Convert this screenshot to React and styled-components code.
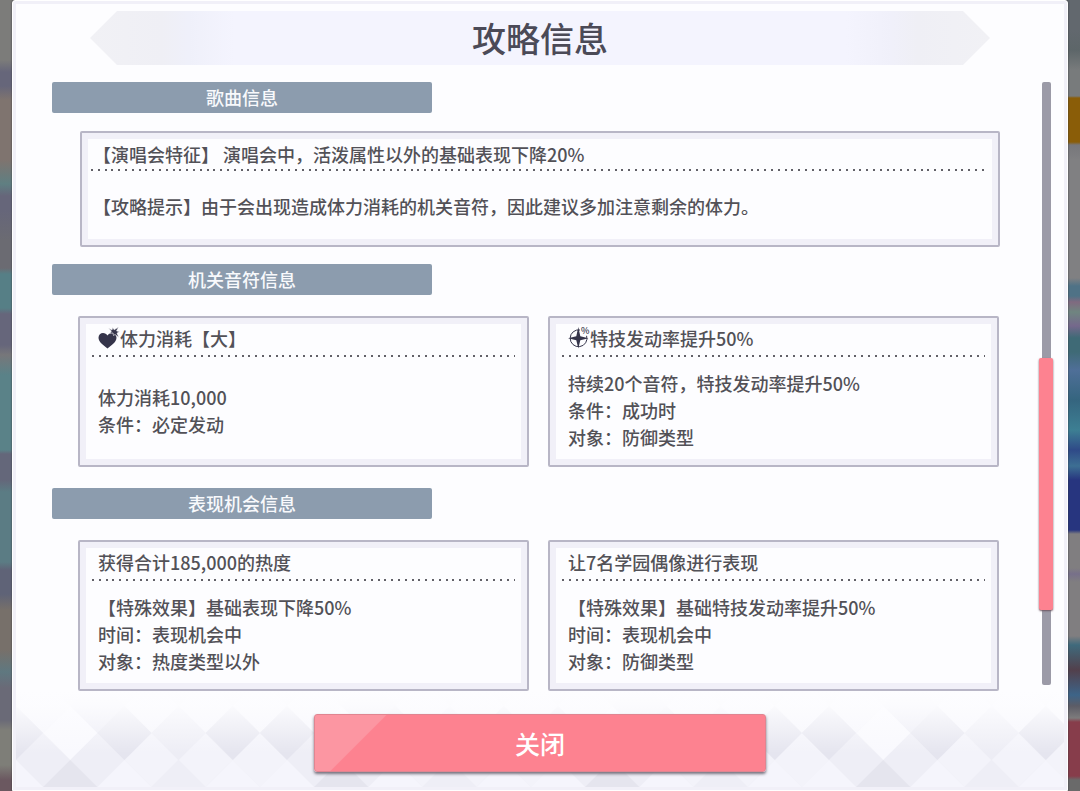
import React from "react";
import styled, { createGlobalStyle } from "styled-components";

const colors = {
  text: "#525157",
  title: "#4b4a57",
  icon: "#35344a",
  paper: "#fdfdff",
  frame: "#f1f0f8",
  line: "#b8b6c6",
  tag: "#8c9cae",
  pink: "#fd8290",
  pinkLight: "#fc96a2",
  track: "#9b9aa7",
};

const GlobalStyle = createGlobalStyle`
  * {
    box-sizing: border-box;
  }

  body {
    margin: 0;
    font-family: "Noto Sans CJK SC", "Noto Sans", sans-serif;
    font-weight: 500;
    color: ${colors.text};
  }
`;

const Backdrop = styled.div`
  min-height: 100vh;
  display: flex;
  padding: 0 12px;
  background:
    linear-gradient(
        #7c7c7a 0 60px, #66667a 72px 86px, #7f746f 100px 160px, #5f7f82 184px,
        #66667a 196px 210px, #6b6b72 240px 268px, #567f86 274px 308px,
        #66667b 314px 345px, #77777a 355px, #5a8288 375px 450px,
        #64677a 454px 480px, #5b7c84 492px 562px, #5f6377 570px 594px,
        #77706a 610px 650px, #5f7880 672px, #6a6a77 688px 720px,
        #7e7e78 730px 765px, #6b5860 780px
      )
      left / 50% 100% no-repeat,
    linear-gradient(
        #62686e 0 30px, #5d6669 50px, #787b7c 70px 96px, #8a5d08 98px 142px,
        #77777b 145px, #808082 160px 278px, #4f7286 286px 296px,
        #806a80 302px, #6f8580 312px, #75688c 326px, #3f6a76 338px 352px,
        #4f6f98 370px, #35657f 400px, #3d7f93 430px, #2f4a88 450px,
        #3d6f93 466px, #27357f 480px 530px, #807e80 534px 568px,
        #77708a 574px, #807e80 582px 636px, #3f6a7c 645px, #52404c 670px,
        #3d6488 695px, #5c5c66 706px, #7d7b7c 718px, #873d4b 722px 776px,
        #6a6a6a 780px
      )
      right / 50% 100% no-repeat;
`;

const Dialog = styled.main`
  flex: 1;
  min-width: 0;
  display: flex;
  flex-direction: column;
  padding-top: 10px;
  border: 1px solid #ffffff;
  border-radius: 3px 3px 0 0;
  background: ${colors.paper};
  box-shadow: inset 0 0 0 3px ${colors.frame}, 0 0 2px #33323a;
`;

const Banner = styled.h1`
  margin: 0 77px;
  height: 54px;
  display: flex;
  align-items: center;
  justify-content: center;
  font-size: 34px;
  line-height: 54px;
  font-weight: 500;
  color: ${colors.title};
  background: linear-gradient(
    to right,
    #f1f1f5,
    #efeff5 8%,
    #eff0fa 11%,
    #f4f4fe 16% 84%,
    #f0f0fa 89%,
    #efeff5 92%,
    #f1f1f5
  );
  clip-path: polygon(
    0 50%,
    27px 0,
    calc(100% - 27px) 0,
    100% 50%,
    calc(100% - 27px) 100%,
    27px 100%
  );
`;

const Body = styled.div`
  flex: 1;
  display: flex;
  gap: 39px;
  padding: 17px 14px 0 39px;
`;

const Content = styled.div`
  flex: 1;
  min-width: 0;
  display: flex;
  flex-direction: column;
`;

const Section = styled.section`
  padding-bottom: ${(props) => (props.$wide ? "17px" : "21px")};

  &:last-child {
    padding-bottom: 0;
  }
`;

const SectionTag = styled.h2`
  margin: 0;
  width: 380px;
  max-width: 100%;
  height: 31px;
  border-radius: 2px;
  text-align: center;
  font-size: 18px;
  line-height: 31px;
  font-weight: 500;
  color: #f8f9fc;
  background: ${colors.tag};
`;

const Cards = styled.div`
  display: grid;
  grid-template-columns: ${(props) => (props.$wide ? "1fr" : "1fr 1fr")};
  gap: 19px;
  padding: ${(props) => (props.$wide ? "18px 0 0 28px" : "21px 1px 0 26px")};
`;

const CardBox = styled.article`
  display: flex;
  flex-direction: column;
  min-height: ${(props) => (props.$wide ? "116px" : "151px")};
  padding: ${(props) => (props.$wide ? "8px 10px 4px 9px" : "9px 12px 1px")};
  border: 2px solid ${colors.line};
  border-radius: 2px;
  box-shadow: inset 0 0 0 6px ${colors.frame};
`;

const CardTitle = styled.h3`
  margin: 0;
  display: flex;
  align-items: center;
  padding: ${(props) => (props.$wide ? "0 2px 2px" : "0 6px 6px")};
  height: 28px;
  font-size: 18px;
  line-height: 22px;
  font-weight: 500;
`;

// five dots every 34px
const Dots = styled.div`
  height: 2px;
  background: linear-gradient(
      to right,
      #626168 0 2px,
      transparent 2px 7px,
      #626168 7px 9px,
      transparent 9px 14px,
      #626168 14px 16px,
      transparent 16px 20px,
      #626168 20px 22px,
      transparent 22px 27px,
      #626168 27px 29px,
      transparent 29px
    )
    left / 34px 2px repeat-x;
`;

const CardText = styled.div`
  flex: 1;
  display: flex;
  flex-direction: column;
  justify-content: center;
  padding: 0 ${(props) => (props.$wide ? "2px" : "6px")};
  font-size: 18px;
  line-height: 27px;

  p {
    margin: 0;
  }
`;

const Icon = styled.svg`
  flex: none;
  width: 22px;
  height: 24px;
  overflow: visible;
`;

const Scrollbar = styled.div`
  width: 14px;
  margin-bottom: 6px;
  display: flex;
  flex-direction: column;
  align-items: center;
`;

const Track = styled.div`
  width: 9px;
  flex: ${(props) => props.$size};
  border-radius: ${(props) => (props.$end ? "0 0 2px 2px" : "2px 2px 0 0")};
  background: ${colors.track};
`;

const Thumb = styled.div`
  width: 14px;
  flex: ${(props) => props.$size};
  border-radius: 2px;
  background: ${colors.pink};
  box-shadow: 0 1px 2px #6d5560;
  z-index: 1;
`;

const Footer = styled.footer`
  position: relative;
  display: flex;
  justify-content: center;
  padding: 23px 0 18px;
`;

const Diamonds = styled.svg`
  position: absolute;
  inset: 0 3px 3px;
  width: calc(100% - 6px);
  height: calc(100% - 3px);
`;

const CloseButton = styled.button`
  position: relative;
  width: 452px;
  max-width: 90%;
  height: 58px;
  padding: 0;
  border: 1px solid #e08591;
  border-radius: 3px;
  font-family: inherit;
  font-size: 25px;
  line-height: 54px;
  font-weight: 500;
  color: #ffffff;
  background: linear-gradient(
    135deg,
    ${colors.pinkLight} 50px,
    ${colors.pink} 51px
  );
  box-shadow: 0 2px 3px #77717d;
  cursor: pointer;
`;

const HeartIcon = () => (
  <Icon viewBox="0 0 22 24" aria-hidden="true">
    <path
      fill={colors.icon}
      d="M9.500 22.500C5.500 19.500 .5 16 .5 11.800C.5 8.800 2.600 7 5 7C7 7 8.600 8 9.500 9.600C10.400 8 12 7 14 7C16.400 7 18.500 8.800 18.500 11.800C18.500 16 13.500 19.500 9.500 22.500Z"
    />
    <path
      fill={colors.icon}
      stroke={colors.paper}
      strokeWidth="0.6"
      d="M10.500 2L14 4L14.600 1.500L16.200 3.800L20.500 1L18.600 5L21.500 5.500L19 7.200L21 11.500L17 8.500L15.500 9.500L15 7L12 7L13.300 5.200Z"
    />
  </Icon>
);

const SparkIcon = () => (
  <Icon viewBox="0 0 22 24" aria-hidden="true">
    <path
      fill="none"
      stroke={colors.icon}
      strokeWidth="1"
      d="M12 4A8.400 8.400 0 1 0 18.600 9.800"
    />
    <path
      fill={colors.icon}
      d="M10.300 1L12.300 10.200L20.500 12.200L12.300 14.200L10.300 22.500L8.300 14.200L0 12.200L8.300 10.200Z"
    />
    <text x="13" y="8" fontSize="9" fill={colors.icon}>
      %
    </text>
  </Icon>
);

const CELL = 54.2;
const HALF = CELL / 2;

// one entry per row, the shades repeat every five diamonds
const rows = [
  { y: 15, start: HALF, fills: ["#f6f6fc", "#ececf5", "#f6f6fc", "#f6f6fc", "#f6f6fc"] },
  { y: 69, start: HALF, fills: ["#eeeef6", "#eeeef6", "#f3f3fa", "#f3f3fa", "#f3f3fa"] },
  { y: 42, start: 0, fills: ["#e5e5ef", "#f9f9fe", "#e5e5ef", "#ededf5", "#e5e5ef", "#e5e5ef"] },
  { y: 96, start: 0, fills: ["#f5f5fc", "#e5e5ee", "#f5f5fc", "#eeeef6", "#f5f5fc", "#f5f5fc"] },
];

const FooterPattern = () => (
  <Diamonds aria-hidden="true">
    <defs>
      <pattern id="diamonds" width={CELL * 5} height="100" patternUnits="userSpaceOnUse">
        <rect width="272" height="100" fill="#f0f0f8" />
        {rows.map(({ y, start, fills }) =>
          fills.map((fill, i) => {
            const x = start + i * CELL;
            return (
              <path
                key={`${i}-${y}`}
                fill={fill}
                d={`M${x - HALF} ${y}L${x} ${y - 27}L${x + HALF} ${y}L${x} ${y + 27}Z`}
              />
            );
          })
        )}
      </pattern>
      <linearGradient id="fade" x2="0" y2="1">
        <stop offset="0" stopColor={colors.paper} />
        <stop offset="0.15" stopColor={colors.paper} stopOpacity="0.9" />
        <stop offset="0.65" stopColor={colors.paper} stopOpacity="0" />
      </linearGradient>
    </defs>
    <rect width="100%" height="100%" fill="url(#diamonds)" />
    <rect width="100%" height="100%" fill="url(#fade)" />
  </Diamonds>
);

const sections = [
  {
    title: "歌曲信息",
    wide: true,
    cards: [
      {
        title: "【演唱会特征】 演唱会中，活泼属性以外的基础表现下降20%",
        lines: [
          "【攻略提示】由于会出现造成体力消耗的机关音符，因此建议多加注意剩余的体力。",
        ],
      },
    ],
  },
  {
    title: "机关音符信息",
    cards: [
      {
        icon: <HeartIcon />,
        title: "体力消耗【大】",
        lines: ["体力消耗10,000", "条件：必定发动"],
      },
      {
        icon: <SparkIcon />,
        title: "特技发动率提升50%",
        lines: [
          "持续20个音符，特技发动率提升50%",
          "条件：成功时",
          "对象：防御类型",
        ],
      },
    ],
  },
  {
    title: "表现机会信息",
    cards: [
      {
        title: "获得合计185,000的热度",
        lines: [
          "【特殊效果】基础表现下降50%",
          "时间：表现机会中",
          "对象：热度类型以外",
        ],
      },
      {
        title: "让7名学园偶像进行表现",
        lines: [
          "【特殊效果】基础特技发动率提升50%",
          "时间：表现机会中",
          "对象：防御类型",
        ],
      },
    ],
  },
];

const Card = ({ icon, title, lines, wide }) => (
  <CardBox $wide={wide}>
    <CardTitle $wide={wide}>
      {icon}
      <span>{title}</span>
    </CardTitle>
    <Dots />
    <CardText $wide={wide}>
      {lines.map((line) => (
        <p key={line}>{line}</p>
      ))}
    </CardText>
  </CardBox>
);

const App = () => {
  return (
    <>
      <GlobalStyle />
      <Backdrop>
        <Dialog>
          <Banner>攻略信息</Banner>
          <Body>
            <Content>
              {sections.map((section) => (
                <Section key={section.title} $wide={section.wide}>
                  <SectionTag>{section.title}</SectionTag>
                  <Cards $wide={section.wide}>
                    {section.cards.map((card) => (
                      <Card key={card.title} wide={section.wide} {...card} />
                    ))}
                  </Cards>
                </Section>
              ))}
            </Content>
            <Scrollbar>
              <Track $size={276} />
              <Thumb $size={251} />
              <Track $size={75} $end />
            </Scrollbar>
          </Body>
          <Footer>
            <FooterPattern />
            <CloseButton type="button">关闭</CloseButton>
          </Footer>
        </Dialog>
      </Backdrop>
    </>
  );
};

export default App;
